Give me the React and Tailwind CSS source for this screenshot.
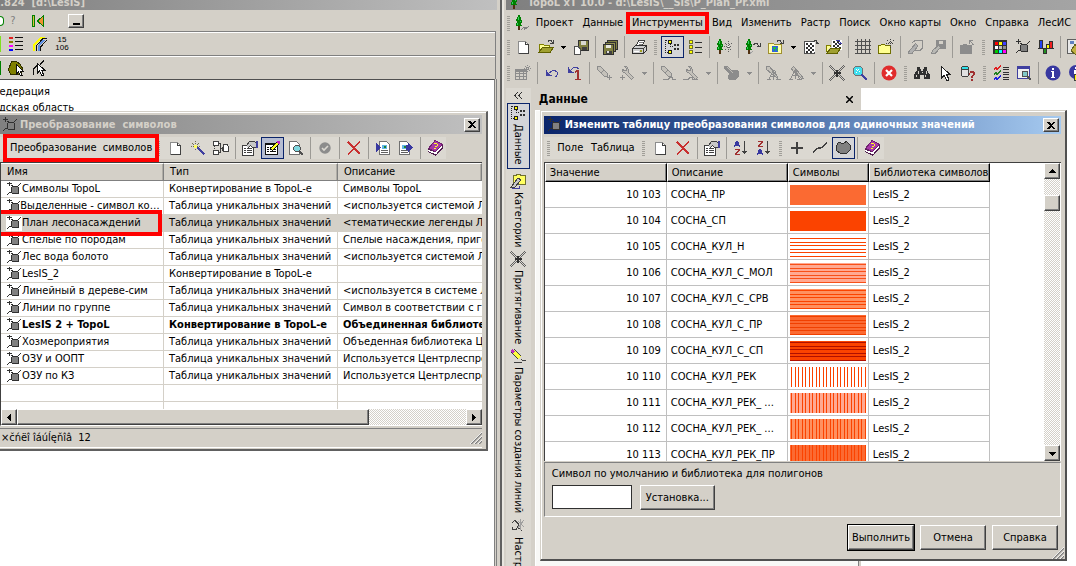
import React from "react";

/* ---------- icons ---------- */

function Ico({ children, w = 16, h = 16 }) {
  return (
    <svg width={w} height={h} viewBox={`0 0 ${w} ${h}`} fill="none" shapeRendering="crispEdges" className="shrink-0" aria-hidden="true">
      {children}
    </svg>
  );
}

const DocIcon = () => (
  <Ico>
    <path d="M3.5 2.5H10.5L13.5 5.5V14.5H3.5Z" fill="#fff" stroke="#8c8c8c" />
    <path d="M10.5 2.5V5.5H13.5V14.5H3.5" stroke="#404040" />
  </Ico>
);
const OpenIcon = () => (
  <Ico>
    <path d="M1.5 13V5.5H5.5L6.5 6.5H11.5V8" fill="#ffff90" stroke="#808000" />
    <path d="M1 13.5L4.5 8.5H15.5L12 13.5Z" fill="#a0a030" stroke="#606000" />
    <path d="M9.5 3.5L11 1.5H13L14.5 4M12 4.5H15.5V1" stroke="#404040" />
  </Ico>
);
const SaveDocIcon = () => (
  <Ico>
    <path d="M5.5 1.5H15.5V11.5H5.5Z" fill="#808040" stroke="#303030" />
    <path d="M8 2H13V6H8Z" fill="#d8d8d0" />
    <path d="M9 8H14V11H9Z" fill="#404040" />
    <path d="M1.5 7.5H5L7.5 10V15.5H1.5Z" fill="#fff" stroke="#505050" />
  </Ico>
);
const MultiSaveIcon = () => (
  <Ico>
    <path d="M5.5 1.5H15.5V10.5H5.5Z" fill="#808040" stroke="#303030" />
    <path d="M3.5 3.5H13.5V12.5H3.5Z" fill="#909050" stroke="#303030" />
    <path d="M1.5 5.5H11.5V15.5H1.5Z" fill="#808040" stroke="#303030" />
    <path d="M4 6H9V9H4Z" fill="#e8e8e0" />
    <path d="M4 12H10V15H4Z" fill="#404040" />
    <path d="M5 12H7V14H5Z" fill="#ddd" />
  </Ico>
);
const PrinterIcon = () => (
  <Ico>
    <path d="M5.5 6.5L7.5 1.5H13.5L11.5 6.5" fill="#fff" stroke="#404040" />
    <path d="M8 3.5H12M7.5 5.5H11" stroke="#808080" />
    <path d="M1.5 9.5L4.5 6.5H15.5V11.5L12.5 14.5H1.5Z" fill="#d0d0d0" stroke="#303030" />
    <path d="M1.5 9.5H12.5V14M12.5 9.5L15 7" stroke="#404040" />
    <path d="M3 12H8V13H3Z" fill="#fff" />
    <path d="M9 11H11V13H9Z" fill="#a0a020" />
  </Ico>
);
const TreeViewIcon = () => (
  <Ico>
    <path d="M1 1h2v1h-2zM1 3h1v1h-1zM1 5h1v1h-1zM1 7h1v1h-1zM1 9h1v1h-1zM1 11h1v1h-1zM1 13h1v1h-1zM3 13h1v1h-1zM6 7h1v1h-1zM8 7h1v1h-1zM6 5h1v1h-1z" fill="#202020" />
    <path d="M4.500 1.500H7.500V4.500H4.500ZM4.500 11.500H7.500V14.500H4.500Z" fill="#ff0" stroke="#202020" />
    <path d="M10 5h2v2h-2zM13 5h2v2h-2zM10 9h2v2h-2zM13 9h2v2h-2z" fill="#303030" />
  </Ico>
);
const ListIcon = () => (
  <Ico>
    <path d="M2.5 1.5h3v3h-3zM2.5 6.5h3v3h-3zM2.5 11.5h3v3h-3z" fill="#ff0" stroke="#707030" />
    <path d="M8 3.5H15M8 8.5H15M8 13.5H15" stroke="#303030" />
  </Ico>
);
const Tree = () => (
  <g>
    <path d="M3 0H5V2H6V5H7V8H6V10H7V11H5V12H3V11H1V8H2V6H1V4H2V2H3Z" fill="#008000" />
    <path d="M3 2H4V5H3ZM5 6H6V7H5ZM2 8H3V10H2Z" fill="#30d060" />
    <path d="M3 11H5V15H3Z" fill="#503010" />
  </g>
);
const TreeStarIcon = () => (
  <Ico>
    <Tree />
    <path d="M12.5 2V13M7.5 7.5H16M9 4L15.5 11M15.5 4L9 11" stroke="#606060" strokeDasharray="1 1" />
    <path d="M12 7h1v1h-1z" fill="#fff" />
  </Ico>
);
const TreeArrowIcon = () => (
  <Ico>
    <Tree />
    <path d="M8.5 6L10 4.5H12L14.5 7.5M11.5 7.5H15V4" stroke="#404040" />
    <path d="M5 14.5L8 12" stroke="#a0a0a0" />
  </Ico>
);
const AppIcon = () => (
  <Ico>
    <Tree />
    <path d="M6 14.5L9 12.5H11L9 14.5L12 13L14 11.5" stroke="#808080" />
  </Ico>
);
const GlobeFolderIcon = () => (
  <Ico>
    <path d="M0.5 14.5V4.5H5.5L6.5 5.5H13.5V14.5Z" fill="#ffffb0" stroke="#a09030" />
    <circle cx="7" cy="10" r="3.4" fill="#3060e0" />
    <path d="M5 8h3v2h-1v2h-1v-2h-1zM9 9h1v3h-1z" fill="#20c040" />
    <path d="M8.5 3.5L10 1.5H12L14.5 4.5M11.5 4.5H15.5V1" stroke="#404040" />
  </Ico>
);
const Checker = ({ x, y, n = 4 }) => {
  const out = [];
  for (let r = 0; r < n; r++)
    for (let c = 0; c < n; c++)
      if ((r + c) % 2 === 0) out.push(<rect key={`${r}-${c}`} x={x + c * 2} y={y + r * 2} width="2" height="2" fill="#303030" />);
  return (
    <g>
      <rect x={x - 1} y={y - 1} width={n * 2 + 2} height={n * 2 + 2} fill="#fff" stroke="none" />
      {out}
    </g>
  );
};
const RasterIcon = () => (
  <Ico>
    <rect x="1.5" y="2.5" width="10" height="12" fill="#fff" stroke="#505050" />
    <Checker x={3} y={4} />
    <path d="M3 12h2v2h-2zM7 12h2v2h-2z" fill="#303030" />
    <path d="M10.5 2.5L12 1.5H13L14.5 4.5M12.5 4.5H16" stroke="#404040" />
  </Ico>
);
const RasterFolderIcon = () => (
  <Ico>
    <path d="M0.5 13V6.5H4.5V8" fill="#ffff90" stroke="#808000" />
    <Checker x={7} y={2} />
    <path d="M0.5 14.5L4.5 9.5H14.5L11 14.5Z" fill="#a0a030" stroke="#606000" />
    <path d="M9.5 1.5H13L15.5 4.5M12 4.5H16" stroke="#4040a0" />
  </Ico>
);
const GridIcon = () => (
  <Ico>
    <path d="M2.5 0V15M6.5 0V15M10.5 0V15M14.5 0V15M0 2.5H16M0 6.5H16M0 10.5H16M0 14.5H16" stroke="#505050" />
  </Ico>
);
const NewFolderIcon = () => (
  <Ico>
    <path d="M0.5 14.5V6.5H2.5L3.5 5.5H6.5L7.5 6.5H12.5V14.5Z" fill="#ffff90" stroke="#707000" />
    <path d="M12.5 0V9M8 4.5H16M9.5 1.5L15.5 7.5M15.5 1.5L9.5 7.5" stroke="#404040" strokeDasharray="1 1" />
  </Ico>
);
const GrayEditIcon = () => (
  <Ico>
    <path d="M5.5 3.5L8 1.5H15.5V9L13 11.5H8" stroke="#8c8c8c" />
    <path d="M2 12.5L8.5 4.5L11 7L5 14.5H1.5Z" fill="#b0b0b0" stroke="#8c8c8c" />
  </Ico>
);
const GraySaveIcon = () => (
  <Ico>
    <path d="M6 1H16V10H9L6 8Z" fill="#8c8c8c" />
    <path d="M9 2H13V5H9Z" fill="#d4d0c8" />
    <path d="M1.5 14.5L2.5 11.5L8.5 6.5L10.5 8.5L5 14.5Z" fill="#b8b8b4" stroke="#8c8c8c" />
  </Ico>
);
const GrayFolderIcon = () => (
  <Ico>
    <path d="M1 15V6H3L4 5H7L8 6H13V15Z" fill="#8c8c8c" />
    <path d="M10.5 1V5M11 1.5H14M11 2L14.5 6" stroke="#8c8c8c" />
  </Ico>
);
const PaletteIcon = () => (
  <Ico>
    <rect x="1" y="1" width="14" height="14" fill="#303030" />
    <path d="M3 3h3v3h-3z" fill="#f00" />
    <path d="M7 3h3v3h-3z" fill="#ff0" />
    <path d="M11 3h3v3h-3z" fill="#4040ff" />
    <path d="M3 7h3v3h-3z" fill="#fff" />
    <path d="M7 7h3v3h-3z" fill="#c0c0c0" />
    <path d="M11 7h3v3h-3z" fill="#909090" />
    <path d="M3 11h3v3h-3z" fill="#0c0" />
    <path d="M7 11h3v3h-3z" fill="#0ff" />
    <path d="M11 11h3v3h-3z" fill="#f0f" />
  </Ico>
);
const NodeIcon = () => (
  <Ico>
    <path d="M6 5h6v1h1v6h-1v1h-6v-1h-1v-6h1z" fill="#303030" />
    <path d="M6 6h6v6h-6z" fill="#808080" />
    <path d="M3 0h1v5h-1zM1 2h5v1h-5zM5 4h2v1h-2zM12 4h1v1h-1zM13 3h1v1h-1zM14 2h1v1h-1zM3 11h2v1h-2zM2 12h1v1h-1zM1 13h1v1h-1zM12 12h1v1h-1z" fill="#303030" />
  </Ico>
);
const ChartIcon = () => (
  <Ico>
    <path d="M1.5 1.5h3v8h-3z" fill="#2040f0" stroke="#303030" />
    <path d="M5.5 9.5h3v5h-3z" fill="#209020" stroke="#303030" />
    <path d="M8.5 5.5h3v4h-3z" fill="#ff0" stroke="#303030" />
    <path d="M11.5 2.5h3v7h-3z" fill="#f02020" stroke="#303030" />
    <path d="M0 9.5H16" stroke="#303030" />
  </Ico>
);
const GearIcon = () => (
  <Ico>
    <path d="M0.5 0.5H10.5V14.5H0.5Z" fill="#e8e8e8" stroke="#606060" />
    <path d="M3 2h4v3h-4z" fill="#6080c0" />
    <path d="M8 5L10 8L14 8L12 11L14 15H8L4 12Z" fill="#c0b040" stroke="#606020" />
  </Ico>
);
const GrayTableIcon = () => (
  <Ico>
    <rect x="0.5" y="4.5" width="11" height="10" fill="#d4d0c8" stroke="#8c8c8c" />
    <path d="M1 5H11V7H1Z" fill="#8c8c8c" />
    <path d="M1 8.5H11M1 11.5H11M4.5 7V14M8.5 7V14" stroke="#8c8c8c" />
    <path d="M12.5 0V7M9 3.5H16M10 1L15 6M15 1L10 6" stroke="#8c8c8c" strokeDasharray="1 1" />
  </Ico>
);
const UndoIcon = () => (
  <Ico>
    <path d="M2.5 5V10.5H8M3 10L7 6.5L9 5.5H11L13 7V10L11.5 12.5" stroke="#4040a0" />
    <path d="M3 7H4V8H5V9H6V10H3Z" fill="#4040a0" />
  </Ico>
);
const UndoOneIcon = () => (
  <Ico>
    <path d="M1.5 2V7.5H7M2 7L5.5 3.5L7 2.5H10L12 4" stroke="#4040a0" />
    <path d="M2 4H3V5H4V6H5V7H2Z" fill="#4040a0" />
    <path d="M9 5H12V14H14V15H8V14H10V7H9V8H8V6H9Z" fill="#a03030" />
  </Ico>
);
const GrayPencil = () => <path d="M1.5 1.5H4.5L11.5 8.5V11.5H8.5L1.5 4.5ZM8 5L5 8M11 11L12.5 12.5" fill="#c4c1ba" stroke="#8c8c8c" />;
const PencilPlusIcon = () => (
  <Ico>
    <GrayPencil />
    <path d="M13.5 10V15M11 12.5H16" stroke="#8c8c8c" />
  </Ico>
);
const PencilLineIcon = () => (
  <Ico>
    <GrayPencil />
    <path d="M3 14.5H8L10 12.5H12L13 14.5H16" stroke="#8c8c8c" />
  </Ico>
);
const GrayWrench = () => <path d="M5.5 1.5L7.5 3.5V5.5H5.5L3.5 4.5V6.5L6.5 8.5L12.5 14.5L14.5 12.5L9.5 7.5V4.5L7.5 1.5Z" fill="#c4c1ba" stroke="#8c8c8c" />;
const WrenchPlusIcon = () => (
  <Ico>
    <GrayWrench />
    <path d="M3.5 10V15M1 12.5H6" stroke="#8c8c8c" />
  </Ico>
);
const WrenchLineIcon = () => (
  <Ico>
    <GrayWrench />
    <path d="M0 14.5H5L7 12.5H9L10 14.5H15" stroke="#8c8c8c" />
  </Ico>
);
const GrayBlobIcon = () => (
  <Ico>
    <path d="M0 1H3L7 5H13L15 7V11L11 15H5L4 12L5 8L0 4Z" fill="#8c8c8c" />
    <path d="M3 2L9 8" stroke="#c0bdb6" />
  </Ico>
);
const TextPencilIcon = () => (
  <Ico>
    <path d="M1.5 1.5H4.5L12.5 11.5L11.5 12.5L1.5 4.5Z" fill="#c4c1ba" stroke="#8c8c8c" />
    <path d="M3.5 15L8.5 5V15M5 11.5H11M9.5 5L13.5 15M2 14.5H6M11 14.5H16" stroke="#8c8c8c" />
  </Ico>
);
const TextWrenchIcon = () => (
  <Ico>
    <path d="M5.5 1.5L8.5 4.5L15.5 13.5L13 13L4.5 5.5L3.5 3.5Z" fill="#c4c1ba" stroke="#8c8c8c" />
    <path d="M2.5 14L7.5 4V14M4 10.5H10M1 14.5H5M8 5L11.5 14M9 14.5H14" stroke="#8c8c8c" />
  </Ico>
);
const SnapIcon = () => (
  <Ico>
    <path d="M1 0L7 6M0 1L6 7M15 0L9 6M16 1L10 7M1 16L7 10M0 15L6 9M15 16L9 10M16 15L10 9" stroke="#606060" />
    <path d="M8 5V12M5 8H12" stroke="#303030" strokeWidth="2" />
  </Ico>
);
const ZoomIcon = () => (
  <Ico>
    <circle cx="6" cy="6" r="5" fill="#40e0f0" stroke="#707070" />
    <path d="M4 4h1v1h-1zM6 4h1v1h-1zM5 5h1v1h-1zM7 6h1v1h-1zM4 7h1v1h-1z" fill="#fff" />
    <path d="M9.5 9.5L15 15" stroke="#4040a0" strokeWidth="2.5" />
  </Ico>
);
const StopIcon = () => (
  <Ico>
    <circle cx="8" cy="8" r="7.5" fill="#e02c2c" shapeRendering="auto" />
    <path d="M5 5L11 11M11 5L5 11" stroke="#fff" strokeWidth="2.2" shapeRendering="auto" />
  </Ico>
);
const BinocularIcon = () => (
  <Ico>
    <path d="M3 2H6V4H7V6H9V4H10V2H13V5L16 10V14H10V10H6V14H0V10L3 5Z" fill="#303030" />
    <path d="M4 6V9M2 10V12M12 6V9M11 10V12M8 7V8" stroke="#d4d0c8" />
  </Ico>
);
const CursorIcon = () => (
  <Ico>
    <path d="M4.5 1.5V13L7 10.5L9.5 15H11.5V13.5L9.5 9.5H13Z" fill="#fff" stroke="#202020" />
  </Ico>
);
const DbQueryIcon = () => (
  <Ico>
    <path d="M1 2h8v9h-8z" fill="#404040" />
    <path d="M2 1h6v1h-6zM2 11h6v1h-6z" fill="#404040" />
    <path d="M2 5h6v6h-6z" fill="#e0e0e0" />
    <path d="M2 2h6v2h-6z" fill="#30e0e8" />
    <path d="M10 6h4v1h1v3h-1v1h-1v2h-2v-2h1v-1h1v-2h-3v2h-1v-2h1zM11 14h2v2h-2z" fill="#a03030" />
  </Ico>
);
const ChecksIcon = () => (
  <Ico>
    <path d="M1 4.5L3 2.5L4 4.5L8 0.5" stroke="#e02020" />
    <path d="M1 9.5L3 7.5L4 9.5L8 5.5" stroke="#208020" />
    <path d="M1 14.5L3 12.5L4 14.5L8 10.5" stroke="#2020e0" />
    <path d="M10 2.5H16M10 4.5H16M10 7.5H16M10 9.5H16M10 12.5H16M10 14.5H16" stroke="#303030" />
  </Ico>
);
const WindowZoomIcon = () => (
  <Ico>
    <rect x="1.5" y="1.5" width="12" height="12" fill="#f0f0f0" stroke="#4040a0" />
    <path d="M1 1H14V4H1Z" fill="#4040a0" />
    <circle cx="9" cy="9" r="3" fill="#80c8c8" stroke="#505050" />
    <path d="M11 11L15 15" stroke="#505050" strokeWidth="2" />
  </Ico>
);
const InfoIcon = () => (
  <Ico>
    <circle cx="8" cy="8" r="7.5" fill="#3838a0" shapeRendering="auto" />
    <path d="M7 3H9V5H7ZM6 6H9V12H10V13H6V12H7V7H6Z" fill="#fff" />
  </Ico>
);
const InfoNoteIcon = () => (
  <Ico>
    <circle cx="8" cy="7" r="7" fill="#3838a0" shapeRendering="auto" />
    <path d="M7 2H9V4H7ZM6 5H9V10H6Z" fill="#fff" />
    <path d="M6.5 9.5H14.5V15.5H6.5Z" fill="#ff0" stroke="#404040" />
  </Ico>
);
const WandIcon = () => (
  <Ico>
    <path d="M7 7L14.5 14.5" stroke="#4040a0" strokeWidth="2" />
    <path d="M5.5 1V11M1 6.5H11M2 3L9 10M9 3L2 10" stroke="#707050" strokeDasharray="1 1" />
    <path d="M4 5h3v3h-3z" fill="#ffff60" />
  </Ico>
);
const StructIcon = () => (
  <Ico>
    <path d="M0.5 1.5h5v4h-5zM0.5 10.5h5v4h-5z" fill="#fff" stroke="#404040" />
    <path d="M10.5 4.5H14L15.5 6.5V11.5H10.5Z" fill="#fff" stroke="#404040" />
    <path d="M6 3.5H7.5V12.5H6M7.5 8.5H10M9 6.5V10.5" stroke="#404040" />
    <path d="M1 6V10" stroke="#404040" strokeDasharray="1 1" />
  </Ico>
);
const PropsIcon = () => (
  <Ico>
    <path d="M0.5 5.5H11.5V15.5H0.5Z" fill="#fff" stroke="#404040" />
    <path d="M2 8.5H4M5 8.5H10M2 10.5H4M5 10.5H10M2 12.5H4M5 12.5H10" stroke="#404040" />
    <path d="M4.5 5.5L7.5 1.5H12L14 2.5V7L10.5 7.5L8.5 5.5L6 8" fill="#c8c8c8" stroke="#404040" />
    <path d="M14 1H16V8H14Z" fill="#4040a0" />
  </Ico>
);
const EditTableIcon = () => (
  <Ico>
    <path d="M0.5 3.5H12.5V14.5H0.5Z" fill="#fff" stroke="#101010" />
    <path d="M0 3H13V5H0Z" fill="#101010" />
    <path d="M2 7.5H4M5 7.5H11M2 9.5H4M5 9.5H11M2 11.5H4M5 11.5H11" stroke="#101010" />
    <path d="M6 10L13 3" stroke="#101010" strokeWidth="4" />
    <path d="M6.5 9.5L13 3" stroke="#ffff20" strokeWidth="2" />
    <path d="M12 1H15V4H13V3H12Z" fill="#c020c0" />
  </Ico>
);
const PreviewIcon = () => (
  <Ico>
    <path d="M1.5 1.5H8.5L11.5 4.5V14.5H1.5Z" fill="#fff" stroke="#707070" />
    <circle cx="9" cy="8.500" r="3.2" fill="#80d8e0" stroke="#505050" />
    <path d="M11 11L15 15" stroke="#505050" strokeWidth="2" />
  </Ico>
);
const CheckCircleIcon = () => (
  <Ico>
    <circle cx="8" cy="8" r="5.700" fill="#8c8c8c" shapeRendering="auto" />
    <path d="M5 8L7 10L11 6" stroke="#dbd8d1" strokeWidth="1.600" shapeRendering="auto" />
  </Ico>
);
const DeleteIcon = () => (
  <Ico>
    <path d="M2 2L14 14" stroke="#c83030" strokeWidth="2" />
    <path d="M14 1.500L2 14.500" stroke="#c83030" strokeWidth="1.400" />
  </Ico>
);
const PageIn = () => (
  <g>
    <path d="M4.500 1.500H11.500L14.500 4.500V14.500H4.500Z" fill="#fff" stroke="#707070" />
    <path d="M7 5H12V9H7Z" fill="#60b8e8" />
    <path d="M9 6H11V8H9Z" fill="#208030" />
    <path d="M6 10.500H13M6 12.500H13" stroke="#606060" />
  </g>
);
const ImportIcon = () => (
  <Ico>
    <PageIn />
    <path d="M1 3L6 7.500L1 12Z" fill="#3838a0" />
  </Ico>
);
const ExportIcon = () => (
  <Ico>
    <g transform="translate(-3 0)">
      <PageIn />
    </g>
    <path d="M8 5H10V3L15 7.500L10 12V10H8Z" fill="#3838a0" />
  </Ico>
);
const BookIcon = () => (
  <Ico>
    <path d="M1 9V12L8.500 16L16 8V5Z" fill="#502050" />
    <path d="M1.500 10.500L8.500 13.500L15 6.500" stroke="#fff" strokeWidth="1.500" />
    <path d="M1.500 8.500L8 0.500L15.500 4.500L8.500 11.500Z" fill="#a838a8" stroke="#702070" />
    <path d="M7 3h3v1h-3zM10 4h1v2h-1zM8 6h2v1h-2zM7 8h2v1h-2z" fill="#ffff20" />
  </Ico>
);
const SortIcon = ({ up }) => (
  <Ico>
    <path d={up ? "M2 1.500H6.500L2.500 6.500H7" : "M1.500 7L3.500 1.500H4.500L6.500 7M2.500 5H6"} stroke={up ? "#a03030" : "#3838a0"} strokeWidth="1.500" />
    <path d={up ? "M1.500 15L3.500 9.500H4.500L6.500 15M2.500 13H6" : "M2 9.500H6.500L2.500 14.500H7"} stroke={up ? "#3838a0" : "#a03030"} strokeWidth="1.500" />
    <path d="M11.500 1V14" stroke="#404040" />
    <path d="M9 11H14V12H13V13H12V14H11V13H10V12H9Z" fill="#404040" />
  </Ico>
);
const PlusIcon = () => (
  <Ico>
    <path d="M8 2V14M2 8H14" stroke="#404040" strokeWidth="2" />
  </Ico>
);
const PolylineIcon = () => (
  <Ico>
    <path d="M1 12L5 8.500L10 7.500L15 3" stroke="#404040" strokeWidth="1.500" />
  </Ico>
);
const PolygonIcon = () => (
  <Ico>
    <path d="M3.500 2.500L8 3.500L11.500 1.500L15.500 5.500V9.500L11.500 13.500H5.500L1.500 10.500V5.500Z" fill="#808080" stroke="#303030" />
  </Ico>
);
const CategoryIcon = () => (
  <Ico>
    <path d="M3.500 10.500V2.500H6L7 1.500H10L11 2.500H15.500V11.500H5Z" fill="#ffff60" stroke="#707030" />
    <path d="M1 14L8 5L11 7L5 14Z" fill="#c8c8c8" stroke="#404040" />
    <path d="M2 15.500H9V13" stroke="#4040a0" />
  </Ico>
);
const PenIcon = () => (
  <Ico>
    <path d="M3 3L10 10" stroke="#404040" strokeWidth="5" />
    <path d="M3 3L10 10" stroke="#ffff40" strokeWidth="3" />
    <path d="M1 2L3 1L5 4L2 5Z" fill="#c030c0" />
    <path d="M11 11.500L13.500 12.500H16M4 14.500H12" stroke="#404040" />
  </Ico>
);
const TuneIcon = () => (
  <Ico>
    <path d="M2 4.500L5 2.500L8 5.500V9.500L12 12.500M2.500 9V11.500H6L8.500 7.500" stroke="#404040" />
    <path d="M8 3L14 9M14 2L8 10M10.500 1V12" stroke="#a0a0a0" />
  </Ico>
);
const SeriesIcon = () => (
  <Ico>
    <path d="M1 1h4v2h-4z" fill="#e02020" />
    <path d="M1 5h4v2h-4z" fill="#808000" />
    <path d="M1 9h4v2h-4z" fill="#f0f" />
    <path d="M1 13h4v2h-4z" fill="#00f" />
    <path d="M7 1.500H15M7 5.500H15M7 9.500H15M7 13.500H15" stroke="#101010" />
  </Ico>
);
const LinesIcon = () => (
  <Ico>
    <path d="M2 15V9L9 1.500H13" stroke="#ffff00" strokeWidth="2" />
    <path d="M4.500 15V9.500L11 2.500H15" stroke="#101010" />
    <path d="M6.500 15V10L12 4" stroke="#6090e0" strokeWidth="2" />
    <path d="M8.500 15V11L14.500 4.500" stroke="#101010" />
  </Ico>
);
const PolygonCursorIcon = () => (
  <Ico>
    <path d="M3.500 1.500H8L12 4L14.500 8.500L13 14.500H2.500L0.500 9.500Z" fill="#808000" stroke="#303000" />
    <path d="M8.500 4.500V14L10.500 12L12 15H14L12.500 11.500H15.500Z" fill="#fff" stroke="#101010" />
  </Ico>
);
const LineCursorIcon = () => (
  <Ico>
    <path d="M1.500 15V9L5 5.500M8 4L12 0.500" stroke="#101010" strokeWidth="1.500" />
    <path d="M5.500 3.500V13L7.500 11L9.500 15H11.500L10 10.500H13Z" fill="#fff" stroke="#101010" />
  </Ico>
);
const FirstIcon = () => (
  <Ico>
    <path d="M2.500 2.500h2v11h-2z" fill="#e0c040" stroke="#008000" />
    <path d="M13.500 2.500V13.500L7.500 8Z" fill="#f09030" stroke="#008000" />
  </Ico>
);

/* ---------- shared pieces ---------- */

function Sep() {
  return (
    <span className="flex w-[6px] shrink-0 justify-center self-stretch">
      <span className="w-px bg-[#9c9a95]" />
    </span>
  );
}
function Grip({ narrow }) {
  return (
    <span className={`flex shrink-0 items-center justify-center self-stretch ${narrow ? "w-[6px]" : "w-[10px]"}`}>
      <span className="h-[15px] w-[3px] bg-[repeating-linear-gradient(#a09e98_0_1px,transparent_1px_2px)]" />
    </span>
  );
}
function Tool({ icon, label, pressed, hot }) {
  const state = hot ? "border border-[#0a246a] bg-[#b6bdd2]" : pressed ? "border border-[#0a246a] bg-[#d4d5d8]" : "";
  return (
    <button type="button" aria-label={label} className={`flex h-[22px] w-[23px] shrink-0 items-center justify-center ${state}`}>
      {icon}
    </button>
  );
}
function Drop({ gray }) {
  return (
    <button type="button" aria-label="Ещё" className="flex w-[12px] shrink-0 items-center justify-center">
      <svg width="5" height="3" shapeRendering="crispEdges" aria-hidden="true">
        <path d="M0 0H5L2.500 3Z" fill={gray ? "#8c8c8c" : "#000"} />
      </svg>
    </button>
  );
}
const raised = "border border-t-white border-l-white border-r-[#404040] border-b-[#404040] bg-[#d4d0c8] shadow-[inset_-1px_-1px_0_#808080]";
function CloseButton() {
  return (
    <button type="button" aria-label="Закрыть" className={`flex h-[14px] w-4 shrink-0 items-center justify-center ${raised}`}>
      <svg width="8" height="7" shapeRendering="crispEdges" aria-hidden="true">
        <path d="M0 0H2L4 2L6 0H8L5 3.500L8 7H6L4 5L2 7H0L3 3.500Z" fill="#000" />
      </svg>
    </button>
  );
}
function Arrow({ d, label }) {
  return (
    <button type="button" aria-label={label} className={`flex size-4 shrink-0 items-center justify-center ${raised}`}>
      <svg width="7" height="7" shapeRendering="crispEdges" aria-hidden="true">
        <path d={d} fill="#000" />
      </svg>
    </button>
  );
}
const track = "bg-[conic-gradient(#fff_25%,#d4d0c8_0_50%,#fff_0_75%,#d4d0c8_0)] bg-[length:2px_2px]";
function SizeGrip() {
  return (
    <svg width="12" height="12" aria-hidden="true">
      <path d="M1 12L12 1M5 12L12 5M9 12L12 9" stroke="#808080" strokeWidth="1.500" />
      <path d="M0 12L12 0M4 12L12 4M8 12L12 8" stroke="#fff" strokeWidth="0.800" />
    </svg>
  );
}
const Mark = ({ className }) => <span className={`pointer-events-none absolute z-20 border-4 border-[#ff0000] ${className}`} />;

/* ---------- symbol conversion window ---------- */

const T = "Таблица уникальных значений";
const K = "Конвертирование в TopoL-е";
const conversions = [
  ["Символы TopoL", K, "Символы TopoL"],
  ["Выделенные - символ контура", T, "<используется системой ЛесИС>"],
  ["План лесонасаждений", T, "<тематические легенды ЛесИС>"],
  ["Спелые по породам", T, "Спелые насаждения, пригодные"],
  ["Лес вода болото", T, "<используется системой ЛесИС>"],
  ["LesIS_2", K, ""],
  ["Линейный в дереве-сим", T, "<используется в системе ЛесИС>"],
  ["Линии по группе", T, "Символ в соответствии с группой"],
  ["LesIS 2 + TopoL", K, "Объединенная библиотека"],
  ["Хозмероприятия", T, "Объеденная библиотека Центр"],
  ["ОЗУ и ООПТ", T, "Используется Центрлеспроект"],
  ["ОЗУ по КЗ", T, "Используется Центрлеспроект"],
];

function ConversionWindow() {
  const head = "h-[18px] border-t border-r border-b border-t-white border-r-[#808080] border-b-[#808080] bg-[#d4d0c8] pl-[6px] text-left font-normal shadow-[inset_-1px_0_0_#b0ada6]";
  return (
    <section aria-label="Преобразование символов" className="absolute top-[111px] right-[12px] left-0 z-10 border-t border-r-2 border-b-2 border-t-[#d4d0c8] border-r-[#606060] border-b-[#606060] bg-[#d4d0c8]">
      <div className="border-t border-white pt-[2px] pr-[4px]">
        <header className="flex h-[19px] items-center gap-[2px] bg-linear-to-r from-[#808080] to-[#c0c0c0] pr-[2px] pl-[2px] text-[#d4d0c8]">
          <NodeIcon />
          <h2 className="min-w-0 grow truncate font-bold whitespace-pre">Преобразование  символов</h2>
          <CloseButton />
        </header>
        <div className="flex h-[28px] items-center">
          <div className="relative flex h-[22px] items-center bg-[#dbd8d1]">
            <Grip />
            <button type="button" className="w-[143px] text-left whitespace-pre">Преобразование  символов</button>
            <Mark className="-inset-y-[3px] left-[3px] -right-[6px]" />
          </div>
          <div className="flex h-[22px] items-center bg-[#dbd8d1]">
            <Grip />
            <Tool label="Создать" icon={<DocIcon />} />
            <Tool label="Мастер" icon={<WandIcon />} />
            <Tool label="Структура" icon={<StructIcon />} />
            <Sep />
            <Tool label="Свойства" icon={<PropsIcon />} />
            <Tool label="Изменить" hot icon={<EditTableIcon />} />
            <Tool label="Просмотр" icon={<PreviewIcon />} />
            <Sep />
            <Tool label="Применить" icon={<CheckCircleIcon />} />
            <Sep />
            <Tool label="Удалить" icon={<DeleteIcon />} />
            <Sep />
            <Tool label="Импорт" icon={<ImportIcon />} />
            <Tool label="Экспорт" icon={<ExportIcon />} />
            <Sep />
            <Tool label="Справка" icon={<BookIcon />} />
          </div>
        </div>
        <div className="border-t border-b border-l border-t-[#404040] border-b-white border-l-[#404040]">
          <div className="h-[246px] overflow-hidden bg-white">
            <table className="w-full table-fixed border-separate border-spacing-0">
              <thead>
                <tr>
                  <th className={`w-[163px] ${head}`}>Имя</th>
                  <th className={`w-[174px] ${head}`}>Тип</th>
                  <th className={head}>Описание</th>
                </tr>
              </thead>
              <tbody>
                {conversions.map((r, i) => (
                  <tr key={i} className={i === 8 ? "font-bold" : i === 2 ? "bg-[#d4d0c8]" : ""}>
                    <td className="relative h-[17px] border-r border-b border-[#d4d0c8] pl-[5px]">
                      <span className="flex items-center">
                        <span className="flex h-[15px] w-4 items-center overflow-hidden bg-white">
                          <NodeIcon />
                        </span>
                        <span className="min-w-0 grow truncate">{r[0]}</span>
                      </span>
                      {i === 2 && <Mark className="-top-[5px] right-px -bottom-[5px] -left-[5px]" />}
                    </td>
                    <td className="h-[17px] truncate border-r border-b border-[#d4d0c8] pl-[5px]">{r[1]}</td>
                    <td className="h-[17px] overflow-hidden border-b border-[#d4d0c8] pl-[5px] whitespace-nowrap">{r[2]}</td>
                  </tr>
                ))}
                {[0, 1].map((i) => (
                  <tr key={i}>
                    <td className="h-[17px] border-r border-b border-[#d4d0c8]" />
                    <td className="h-[17px] border-r border-b border-[#d4d0c8]" />
                    <td className="h-[17px] border-b border-[#d4d0c8]" />
                  </tr>
                ))}
              </tbody>
            </table>
          </div>
          <div className={`flex h-4 ${track}`}>
            <Arrow label="Влево" d="M5 0V7L1 3.500Z" />
            <div className={`w-[352px] ${raised}`} />
            <div className="grow" />
            <Arrow label="Вправо" d="M2 0V7L6 3.500Z" />
          </div>
        </div>
        <footer className="mt-[2px] mb-px flex h-[20px] items-center justify-between border-t border-b border-t-[#808080] border-b-white">
          <span className="pl-px whitespace-pre">×čńëî îáúĺęňîâ  12</span>
          <SizeGrip />
        </footer>
      </div>
    </section>
  );
}

/* ---------- single value table window ---------- */

function Swatch({ base, line, dir }) {
  const rows = [1, 5, 8, 12, 15, 19];
  const cols = Array.from({ length: 22 }, (_, i) => Math.round(1 + i * 3.5));
  return (
    <svg width="76" height="20" shapeRendering="crispEdges" className="block" aria-hidden="true">
      <rect width="76" height="20" fill={base} />
      {dir === "h" && rows.map((y) => <rect key={y} y={y} width="76" height="1" fill={line} />)}
      {dir === "v" && cols.map((x) => <rect key={x} x={x} width="1" height="20" fill={line} />)}
    </svg>
  );
}

const symbols = [
  ["10 103", "СОСНА_ПР", "#fb6a32"],
  ["10 104", "СОСНА_СП", "#fb4300"],
  ["10 105", "СОСНА_КУЛ_Н", "#ffffff", "#fb4300", "h"],
  ["10 106", "СОСНА_КУЛ_С_МОЛ", "#ffa992", "#f85018", "h"],
  ["10 107", "СОСНА_КУЛ_С_СРВ", "#ff9060", "#fb4300", "h"],
  ["10 108", "СОСНА_КУЛ_С_ПР", "#fb6a32", "#f04000", "h"],
  ["10 109", "СОСНА_КУЛ_С_СП", "#fb4300", "#b01000", "h"],
  ["10 110", "СОСНА_КУЛ_РЕК", "#ffffff", "#fb4300", "v"],
  ["10 111", "СОСНА_КУЛ_РЕК_ ...", "#ffa992", "#fb4300", "v"],
  ["10 112", "СОСНА_КУЛ_РЕК_ ...", "#ff9060", "#fb4300", "v"],
  ["10 113", "СОСНА_КУЛ_РЕК_ПР", "#fb6a32", "#fb4300", "v"],
];

function SymbolWindow() {
  const head = "h-[19px] border-t border-r border-b border-l border-t-white border-l-white border-r-black border-b-black bg-[#d4d0c8] pl-1 text-left font-normal whitespace-nowrap shadow-[inset_-1px_-1px_0_#808080]";
  const cell = "h-[26px] border-r border-b border-[#c0c0c0]";
  const btn = `h-[25px] w-[66px] ${raised}`;
  return (
    <section aria-label="Изменить таблицу преобразования символов" className="absolute top-[110px] right-[9px] left-[36px] z-10 border border-t-[#d4d0c8] border-r-2 border-b-2 border-l-[#d4d0c8] border-r-[#505050] border-b-[#505050] bg-[#d4d0c8]">
      <div className="relative border-t border-l border-white pt-[4px] pr-[4px] pb-[9px] pl-[2px]">
        <header className="flex h-[18px] items-center gap-[2px] bg-linear-to-r from-[#0a246a] to-[#a6caf0] pr-[2px] pl-[3px] text-white">
          <NodeIcon />
          <h2 className="min-w-0 grow truncate font-bold">Изменить таблицу преобразования символов для одиночных значений</h2>
          <CloseButton />
        </header>
        <div className="flex h-[28px] items-center">
          <div className="flex h-[22px] items-center bg-[#dbd8d1]">
            <Grip />
            <button type="button" className="w-[33px]">Поле</button>
            <button type="button" className="w-[52px]">Таблица</button>
          </div>
          <div className="flex h-[22px] items-center bg-[#dbd8d1]">
            <Grip />
            <Tool label="Создать" icon={<DocIcon />} />
            <Tool label="Удалить" icon={<DeleteIcon />} />
            <Sep />
            <Tool label="Свойства" icon={<PropsIcon />} />
            <Sep />
            <Tool label="По возрастанию" icon={<SortIcon />} />
            <Tool label="По убыванию" icon={<SortIcon up />} />
          </div>
          <div className="flex h-[22px] items-center bg-[#dbd8d1]">
            <Grip />
            <Tool label="Точка" icon={<PlusIcon />} />
            <Tool label="Линия" icon={<PolylineIcon />} />
            <Tool label="Полигон" pressed icon={<PolygonIcon />} />
            <Sep />
            <Tool label="Справка" icon={<BookIcon />} />
          </div>
        </div>
        <div className="flex h-[299px] border-t border-l border-t-[#404040] border-l-[#404040] bg-white">
          <div className="grow overflow-hidden">
            <table className="w-[445px] table-fixed border-separate border-spacing-0">
              <thead>
                <tr>
                  <th className={`w-[122px] ${head}`}>Значение</th>
                  <th className={`w-[121px] ${head}`}>Описание</th>
                  <th className={`w-[81px] ${head}`}>Символы</th>
                  <th className={head}>Библиотека символов</th>
                </tr>
              </thead>
              <tbody>
                {symbols.map(([v, d, base, line, dir]) => (
                  <tr key={v}>
                    <td className={`pr-[5px] text-right ${cell}`}>{v}</td>
                    <td className={`pl-1 whitespace-nowrap ${cell}`}>{d}</td>
                    <td className={`pl-[2px] ${cell}`}>
                      <Swatch base={base} line={line} dir={dir} />
                    </td>
                    <td className={`pl-1 ${cell}`}>LesIS_2</td>
                  </tr>
                ))}
              </tbody>
            </table>
          </div>
          <div className={`mr-px flex w-4 flex-col ${track}`}>
            <Arrow label="Вверх" d="M0 5H7L3.500 1Z" />
            <div className="h-4" />
            <div className={`h-4 ${raised}`} />
            <div className="grow" />
            <Arrow label="Вниз" d="M0 2H7L3.500 6Z" />
          </div>
        </div>
        <div className="mt-px border border-t-[#808080] border-r-white border-b-white border-l-[#808080] px-[7px] pt-1 pb-[6px]">
          <label htmlFor="default-symbol" className="block">Символ по умолчанию и библиотека для полигонов</label>
          <div className="mt-1 flex gap-2">
            <input id="default-symbol" type="text" className="h-6 w-[80px] border border-[#303030] bg-white px-1" />
            <button type="button" className={`h-[25px] w-[75px] ${raised}`}>Установка...</button>
          </div>
        </div>
        <div className="mt-2 flex justify-end gap-[6px] pr-[3px]">
          <button type="button" className={`h-[25px] w-[66px] outline outline-black ${raised}`}>Выполнить</button>
          <button type="button" className={btn}>Отмена</button>
          <button type="button" className={btn}>Справка</button>
        </div>
        <div className="absolute right-px bottom-0">
          <SizeGrip />
        </div>
      </div>
    </section>
  );
}

/* ---------- main windows ---------- */

function LeftApp() {
  return (
    <div className="relative flex h-full min-w-0 flex-[501] flex-col overflow-hidden border-r-2 border-[#606060] bg-[#d4d0c8] pr-[3px]">
      <header className="flex h-[10px] shrink-0 items-end bg-linear-to-r from-[#808080] to-[#c0c0c0] font-bold text-[#d4d0c8]">
        <span className="flex w-[85px] justify-end whitespace-pre">1.824  [d:\LesIS]</span>
      </header>
      <div className="flex h-[21px] shrink-0 items-center">
        <span className="h-[10px] w-1 rounded-r-full border border-l-0 border-[#008000] bg-white" />
        <button type="button" className="w-[18px] text-[#808080]">?</button>
        <span className="w-[8px]" />
        <button type="button" aria-label="В начало"><FirstIcon /></button>
        <button type="button" aria-label="Свернуть" className={`ml-[22px] flex h-[14px] w-4 items-end justify-center pb-[2px] ${raised}`}>
          <span className="h-[2px] w-[7px] bg-black" />
        </button>
      </div>
      <div className="mr-px flex h-[24px] shrink-0 items-center border-t border-r border-[#808080] shadow-[inset_0_1px_0_#fff]">
        <span className="h-4 w-px bg-[#80e020]" />
        <span className="w-[7px]" />
        <button type="button" aria-label="Легенда"><SeriesIcon /></button>
        <span className="w-2" />
        <button type="button" aria-label="Линии"><LinesIcon /></button>
        <button type="button" className="ml-[7px] w-[14px] font-['Liberation_Sans'] text-[8px] leading-[8px]">15 106</button>
      </div>
      <div className="mr-px flex h-[24px] shrink-0 items-center border-t border-r border-[#808080] shadow-[inset_0_1px_0_#fff]">
        <span className="h-[14px] w-px bg-[#008000]" />
        <span className="w-[7px]" />
        <button type="button" aria-label="Выбор полигона"><PolygonCursorIcon /></button>
        <span className="w-2" />
        <button type="button" aria-label="Выбор линии"><LineCursorIcon /></button>
      </div>
      <div className="flex min-h-0 grow border-r border-[#808080] pr-px">
        <div className="grow border-t border-r border-[#505050] border-r-[#808080] bg-white pt-1 leading-4">
          <p className="flex w-[50px] justify-end overflow-hidden whitespace-nowrap">Российская Федерация</p>
          <p className="flex w-[74px] justify-end overflow-hidden whitespace-nowrap">Ленинградская область</p>
        </div>
      </div>
      <ConversionWindow />
    </div>
  );
}

const menus = ["Проект", "Данные", "Инструменты", "Вид", "Изменить", "Растр", "Поиск", "Окно карты", "Окно", "Справка", "ЛесИС"];

function SideTab({ icon, label, active }) {
  return (
    <button
      type="button"
      className={
        active
          ? "flex w-[23px] shrink-0 flex-col items-center gap-[3px] border border-[#0a246a] bg-[#d4d5d8] pt-px pb-[3px]"
          : "flex w-[23px] shrink-0 flex-col items-center gap-[3px]"
      }
    >
      {icon}
      <span className="whitespace-nowrap [writing-mode:vertical-rl]">{label}</span>
    </button>
  );
}

function RightApp() {
  return (
    <div className="relative flex h-full min-w-0 flex-[575] flex-col overflow-hidden border-l-2 border-[#e8e6e0] bg-[#d4d0c8] pl-[2px]">
      <header className="flex h-[10px] shrink-0 items-end gap-[2px] bg-linear-to-r from-[#808080] to-[#a4a4a4] pl-[4px] font-bold whitespace-pre text-[#d4d0c8]">
        <AppIcon />
        <span>TopoL xT 10.0 - d:\LesIS\__Sis\P_Plan_Pr.xml</span>
      </header>
      <nav className="flex h-[26px] shrink-0 items-center">
        <Grip narrow />
        <span className="w-6 pl-[3px]"><AppIcon /></span>
        <span className="flex gap-[9px] whitespace-nowrap">
          {menus.map((m) => (
            <a key={m} href="#" className="relative">
              {m}
              {m === "Инструменты" && <Mark className="-inset-x-[6px] -inset-y-1" />}
            </a>
          ))}
        </span>
      </nav>
      <div className="flex h-[22px] shrink-0 items-center">
        <Grip narrow />
        <Tool label="Создать" icon={<DocIcon />} />
        <Tool label="Открыть" icon={<OpenIcon />} />
        <Drop />
        <Tool label="Сохранить" icon={<SaveDocIcon />} />
        <Sep />
        <Tool label="Сохранить все" icon={<MultiSaveIcon />} />
        <Sep />
        <Tool label="Печать" icon={<PrinterIcon />} />
        <Grip />
        <Tool label="Дерево" pressed icon={<TreeViewIcon />} />
        <Tool label="Список" icon={<ListIcon />} />
        <Sep />
        <Tool label="Новый проект" icon={<TreeStarIcon />} />
        <Sep />
        <Tool label="Открыть проект" icon={<TreeArrowIcon />} />
        <Tool label="Открыть карту" icon={<GlobeFolderIcon />} />
        <Drop />
        <Tool label="Растр" icon={<RasterIcon />} />
        <Tool label="Открыть растр" icon={<RasterFolderIcon />} />
        <Sep />
        <Tool label="Сетка" icon={<GridIcon />} />
        <Tool label="Новая папка" icon={<NewFolderIcon />} />
        <Sep />
        <Tool label="Правка" icon={<GrayEditIcon />} />
        <Tool label="Записать" icon={<GraySaveIcon />} />
        <Sep />
        <Tool label="Закрыть папку" icon={<GrayFolderIcon />} />
        <Grip />
        <Tool label="Палитра" icon={<PaletteIcon />} />
        <Tool label="Символы" icon={<NodeIcon />} />
        <Tool label="Диаграмма" icon={<ChartIcon />} />
        <Sep />
        <Tool label="Настройки" icon={<GearIcon />} />
      </div>
      <div className="mt-1 mb-1 flex h-[22px] shrink-0 items-center">
        <Grip narrow />
        <Tool label="Таблица" icon={<GrayTableIcon />} />
        <Sep />
        <Tool label="Отменить" icon={<UndoIcon />} />
        <Tool label="Отменить одно" icon={<UndoOneIcon />} />
        <Sep />
        <Tool label="Добавить точку" icon={<PencilPlusIcon />} />
        <Tool label="Править точку" icon={<WrenchPlusIcon />} />
        <Drop gray />
        <Sep />
        <Tool label="Добавить линию" icon={<PencilLineIcon />} />
        <Tool label="Править линию" icon={<WrenchLineIcon />} />
        <Drop gray />
        <Sep />
        <Tool label="Полигон" icon={<GrayBlobIcon />} />
        <Drop gray />
        <Sep />
        <Tool label="Добавить текст" icon={<TextPencilIcon />} />
        <Tool label="Править текст" icon={<TextWrenchIcon />} />
        <Drop gray />
        <Sep />
        <Tool label="Притягивание" icon={<SnapIcon />} />
        <Tool label="Масштаб" icon={<ZoomIcon />} />
        <Sep />
        <Tool label="Стоп" icon={<StopIcon />} />
        <Grip />
        <Tool label="Найти" icon={<BinocularIcon />} />
        <Tool label="Выбрать" icon={<CursorIcon />} />
        <Tool label="Запрос" icon={<DbQueryIcon />} />
        <Grip />
        <Tool label="Проверки" icon={<ChecksIcon />} />
        <Tool label="Окно" icon={<WindowZoomIcon />} />
        <Sep />
        <Tool label="Информация" icon={<InfoIcon />} />
        <Tool label="Заметка" icon={<InfoNoteIcon />} />
      </div>
      <div className="flex min-h-0 grow">
        <aside className="flex w-[25px] shrink-0 flex-col items-center gap-1 overflow-hidden bg-[#dbd8d1]">
          <button type="button" aria-label="Свернуть панель" className="flex h-[11px] w-full shrink-0 items-end justify-center">
            <svg width="9" height="7" shapeRendering="crispEdges" fill="none" aria-hidden="true">
              <path d="M4 0L1 3.500L4 7M8 0L5 3.500L8 7" stroke="#303030" />
            </svg>
          </button>
          <SideTab active icon={<TreeViewIcon />} label="Данные" />
          <SideTab icon={<CategoryIcon />} label="Категории" />
          <SideTab icon={<SnapIcon />} label="Притягивание" />
          <SideTab icon={<PenIcon />} label="Параметры создания линий" />
          <SideTab icon={<TuneIcon />} label="Настройки" />
        </aside>
        <div className="flex w-[330px] shrink-0 flex-col border-r-2 border-[#d4d0c8] pl-1">
          <div className="flex h-[22px] shrink-0 items-center justify-between pr-[6px] pl-[4px] text-[12px] font-bold">
            <span>Данные</span>
            <button type="button" aria-label="Закрыть панель">
              <svg width="7" height="7" aria-hidden="true">
                <path d="M0 0L7 7M7 0L0 7" stroke="#000" strokeWidth="1.500" />
              </svg>
            </button>
          </div>
          <div className="grow border-t border-r border-l border-white border-r-[#808080] bg-[#f8f8f6]" />
        </div>
        <div className="grow bg-white" />
      </div>
      <SymbolWindow />
    </div>
  );
}

export default function App() {
  return (
    <main className="flex h-screen w-full overflow-hidden bg-[#d4d0c8] font-['DejaVu_Sans_Condensed','DejaVu_Sans',sans-serif] text-[11px] leading-[14px] text-black">
      <LeftApp />
      <RightApp />
    </main>
  );
}
